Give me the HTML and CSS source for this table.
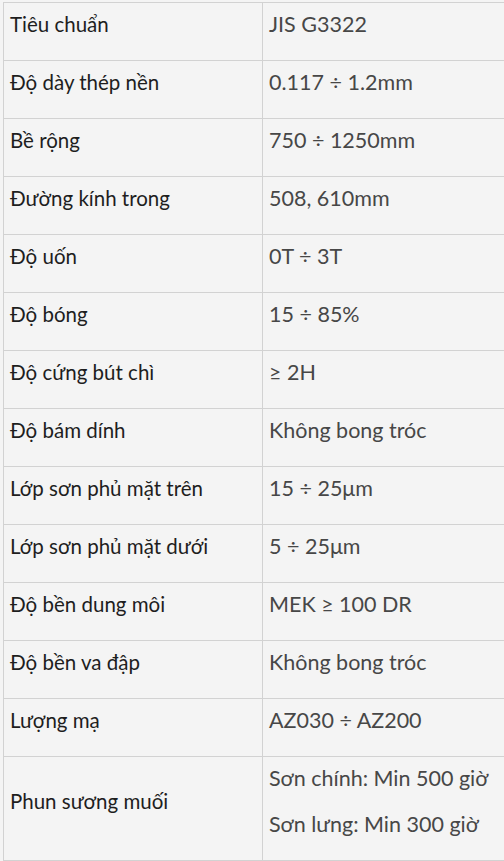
FILE: index.html
```html
<!DOCTYPE html>
<html lang="vi">
<head>
<meta charset="utf-8">
<title>Thông số kỹ thuật</title>
<link rel="stylesheet" href="styles.css">
</head>
<body>
<div class="wrap">
<table class="spec">
<tbody>
<tr><td class="k">Tiêu chuẩn</td><td class="v"><p>JIS G3322</p></td></tr>
<tr><td class="k">Độ dày thép nền</td><td class="v"><p>0.117 ÷ 1.2mm</p></td></tr>
<tr><td class="k">Bề rộng</td><td class="v"><p>750 ÷ 1250mm</p></td></tr>
<tr><td class="k">Đường kính trong</td><td class="v"><p>508, 610mm</p></td></tr>
<tr><td class="k">Độ uốn</td><td class="v"><p>0T ÷ 3T</p></td></tr>
<tr><td class="k">Độ bóng</td><td class="v"><p>15 ÷ 85%</p></td></tr>
<tr><td class="k">Độ cứng bút chì</td><td class="v"><p>≥ 2H</p></td></tr>
<tr><td class="k">Độ bám dính</td><td class="v"><p>Không bong tróc</p></td></tr>
<tr><td class="k">Lớp sơn phủ mặt trên</td><td class="v"><p>15 ÷ 25μm</p></td></tr>
<tr><td class="k">Lớp sơn phủ mặt dưới</td><td class="v"><p>5 ÷ 25μm</p></td></tr>
<tr><td class="k">Độ bền dung môi</td><td class="v"><p>MEK ≥ 100 DR</p></td></tr>
<tr><td class="k">Độ bền va đập</td><td class="v"><p>Không bong tróc</p></td></tr>
<tr><td class="k">Lượng mạ</td><td class="v"><p>AZ030 ÷ AZ200</p></td></tr>
<tr><td class="k">Phun sương muối</td><td class="v"><p>Sơn chính: Min 500 giờ</p><p>Sơn lưng: Min 300 giờ</p></td></tr>
</tbody>
</table>
</div>
</body>
</html>
```

FILE: styles.css
```css
html, body {
  margin: 0;
  padding: 0;
  background: #f4f4f4;
}
.wrap {
  padding: 2px 0 0 3px;
}
.spec {
  border-collapse: collapse;
  width: 501px;
  table-layout: fixed;
  font-family: Lato, "Noto Sans", sans-serif;
  line-height: 26px;
  background: #f4f4f4;
}
.spec td {
  border: 1px solid #d2d2d2;
  padding: 8px 6px 23px 6px;
  vertical-align: middle;
}
.spec td.k {
  width: 246px;
  color: #1e1e1e;
  font-size: 20.5px;
}
.spec td.v {
  color: #474747;
  font-size: 21.5px;
  border-right: none;
  white-space: nowrap;
}
.spec p {
  margin: 0 0 20px 0;
}
.spec p:last-child {
  margin-bottom: 0;
}
```
